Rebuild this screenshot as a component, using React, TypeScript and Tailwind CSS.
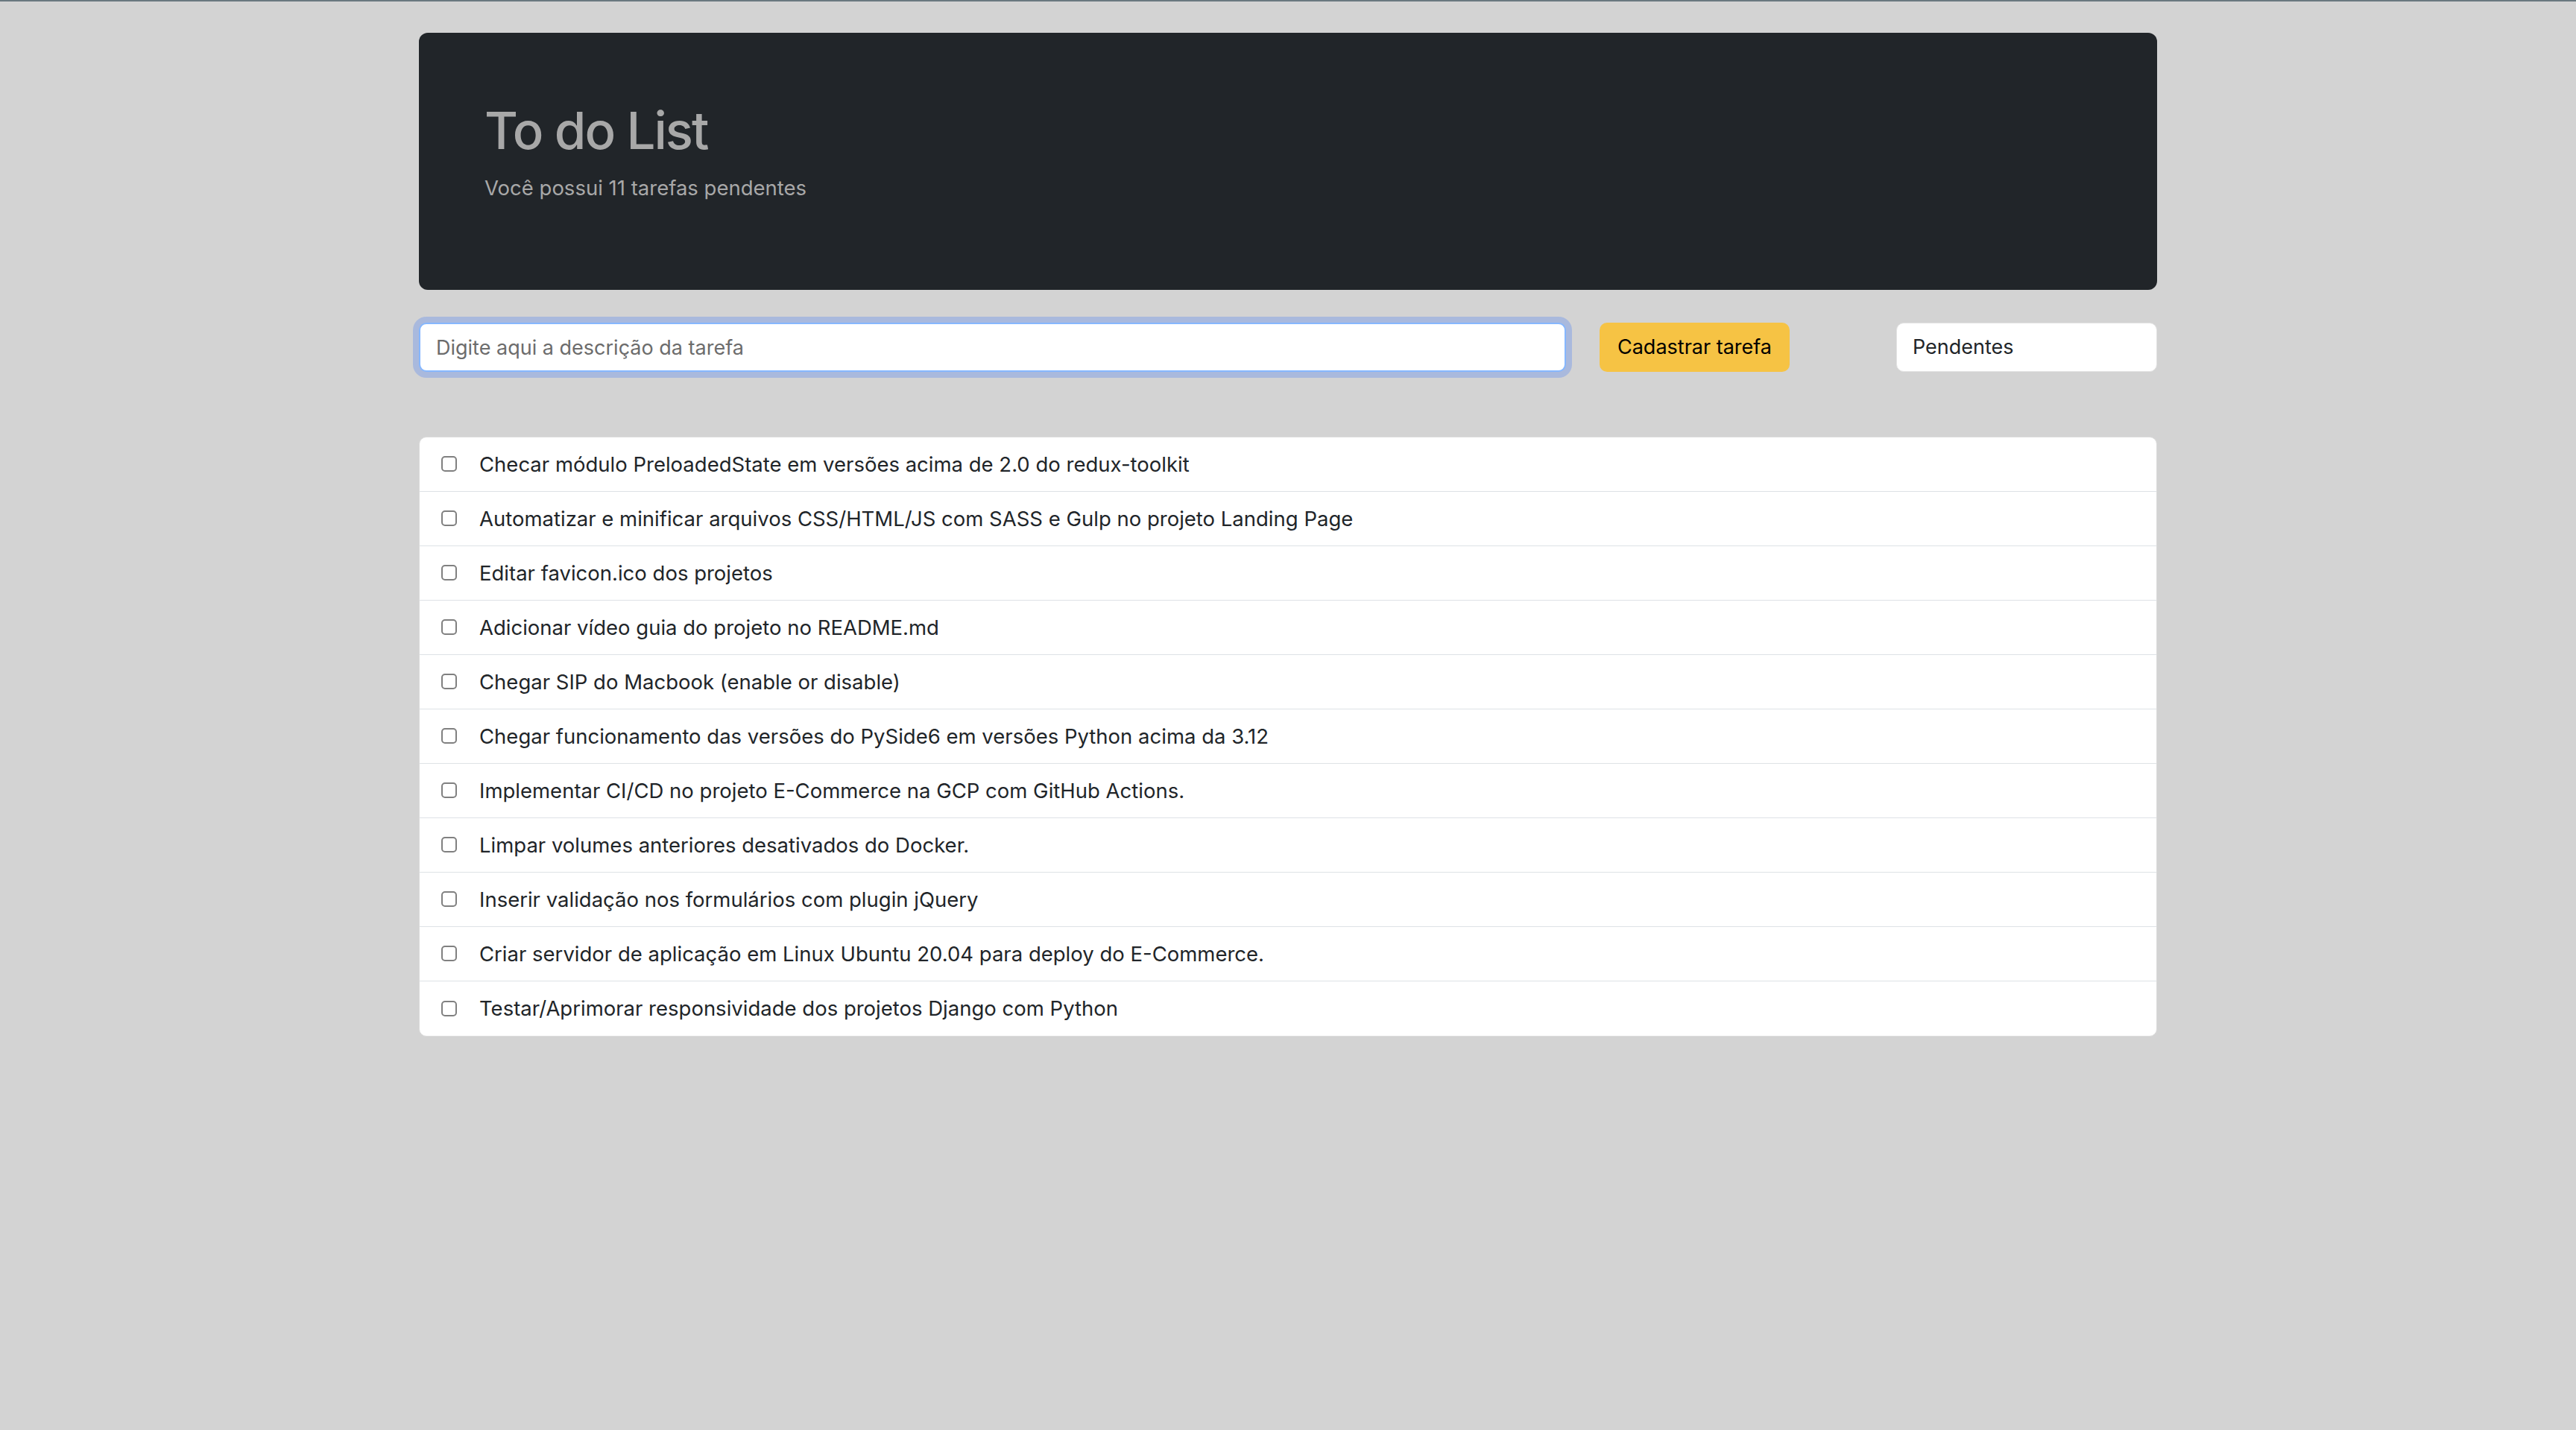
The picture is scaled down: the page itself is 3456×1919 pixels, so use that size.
import React, { useState } from "react";

const tarefas = [
  "Checar módulo PreloadedState em versões acima de 2.0 do redux-toolkit",
  "Automatizar e minificar arquivos CSS/HTML/JS com SASS e Gulp no projeto Landing Page",
  "Editar favicon.ico dos projetos",
  "Adicionar vídeo guia do projeto no README.md",
  "Chegar SIP do Macbook (enable or disable)",
  "Chegar funcionamento das versões do PySide6 em versões Python acima da 3.12",
  "Implementar CI/CD no projeto E-Commerce na GCP com GitHub Actions.",
  "Limpar volumes anteriores desativados do Docker.",
  "Inserir validação nos formulários com plugin jQuery",
  "Criar servidor de aplicação em Linux Ubuntu 20.04 para deploy do E-Commerce.",
  "Testar/Aprimorar responsividade dos projetos Django com Python",
];

export default function App() {
  const [descricao, setDescricao] = useState("");
  const [filtro, setFiltro] = useState("pendentes");

  return (
    <div className="min-h-screen bg-[#d3d3d3] border-t-2 border-[#6a7880] font-['Inter',sans-serif] text-[#212529]">
      <div className="w-[2332px] mx-auto pt-[42px]">
        <header className="h-[345px] rounded-[12px] bg-[#212529] pl-[88px] pt-[97px]">
          <h1 className="text-[69px] leading-none font-medium tracking-[-2px] text-[#a8a8a8]">
            To do List
          </h1>
          <p className="mt-[29px] text-[27.5px] leading-none text-[#a8a8a8]">
            Você possui {tarefas.length} tarefas pendentes
          </p>
        </header>

        <div className="mt-[44px] flex items-center">
          <input
            autoFocus
            value={descricao}
            onChange={(e) => setDescricao(e.target.value)}
            placeholder="Digite aqui a descrição da tarefa"
            className="w-[1539px] h-[66px] rounded-[10px] bg-white border-2 border-[#86b7fe] ring-[8px] ring-[#a9b9dd] outline-none px-[21px] text-[27px] text-[#212529] placeholder:text-[#6c6c6c]"
          />
          <button className="ml-[45px] w-[255px] h-[66px] rounded-[10px] bg-[#f6c344] text-[27px] text-black">
            Cadastrar tarefa
          </button>
          <select
            value={filtro}
            onChange={(e) => setFiltro(e.target.value)}
            className="ml-auto w-[350px] h-[66px] rounded-[10px] bg-white border border-[#e3e3e3] appearance-none px-[21px] text-[27px] text-[#212529] outline-none"
          >
            <option value="pendentes">Pendentes</option>
            <option value="concluidas">Concluídas</option>
            <option value="todas">Todas</option>
          </select>
        </div>

        <ul className="mt-[87px] bg-white border border-[#dcdcdc] rounded-[10px] divide-y divide-[#dee2e6]">
          {tarefas.map((t) => (
            <li key={t} className="h-[73px] flex items-center pl-[29px] pt-[1px]">
              <input
                type="checkbox"
                className="appearance-none w-[21px] h-[21px] rounded-[5px] border-2 border-[#808080] bg-white shrink-0 -mt-[2px]"
              />
              <span className="ml-[30px] text-[27.5px]">{t}</span>
            </li>
          ))}
        </ul>
      </div>
    </div>
  );
}
